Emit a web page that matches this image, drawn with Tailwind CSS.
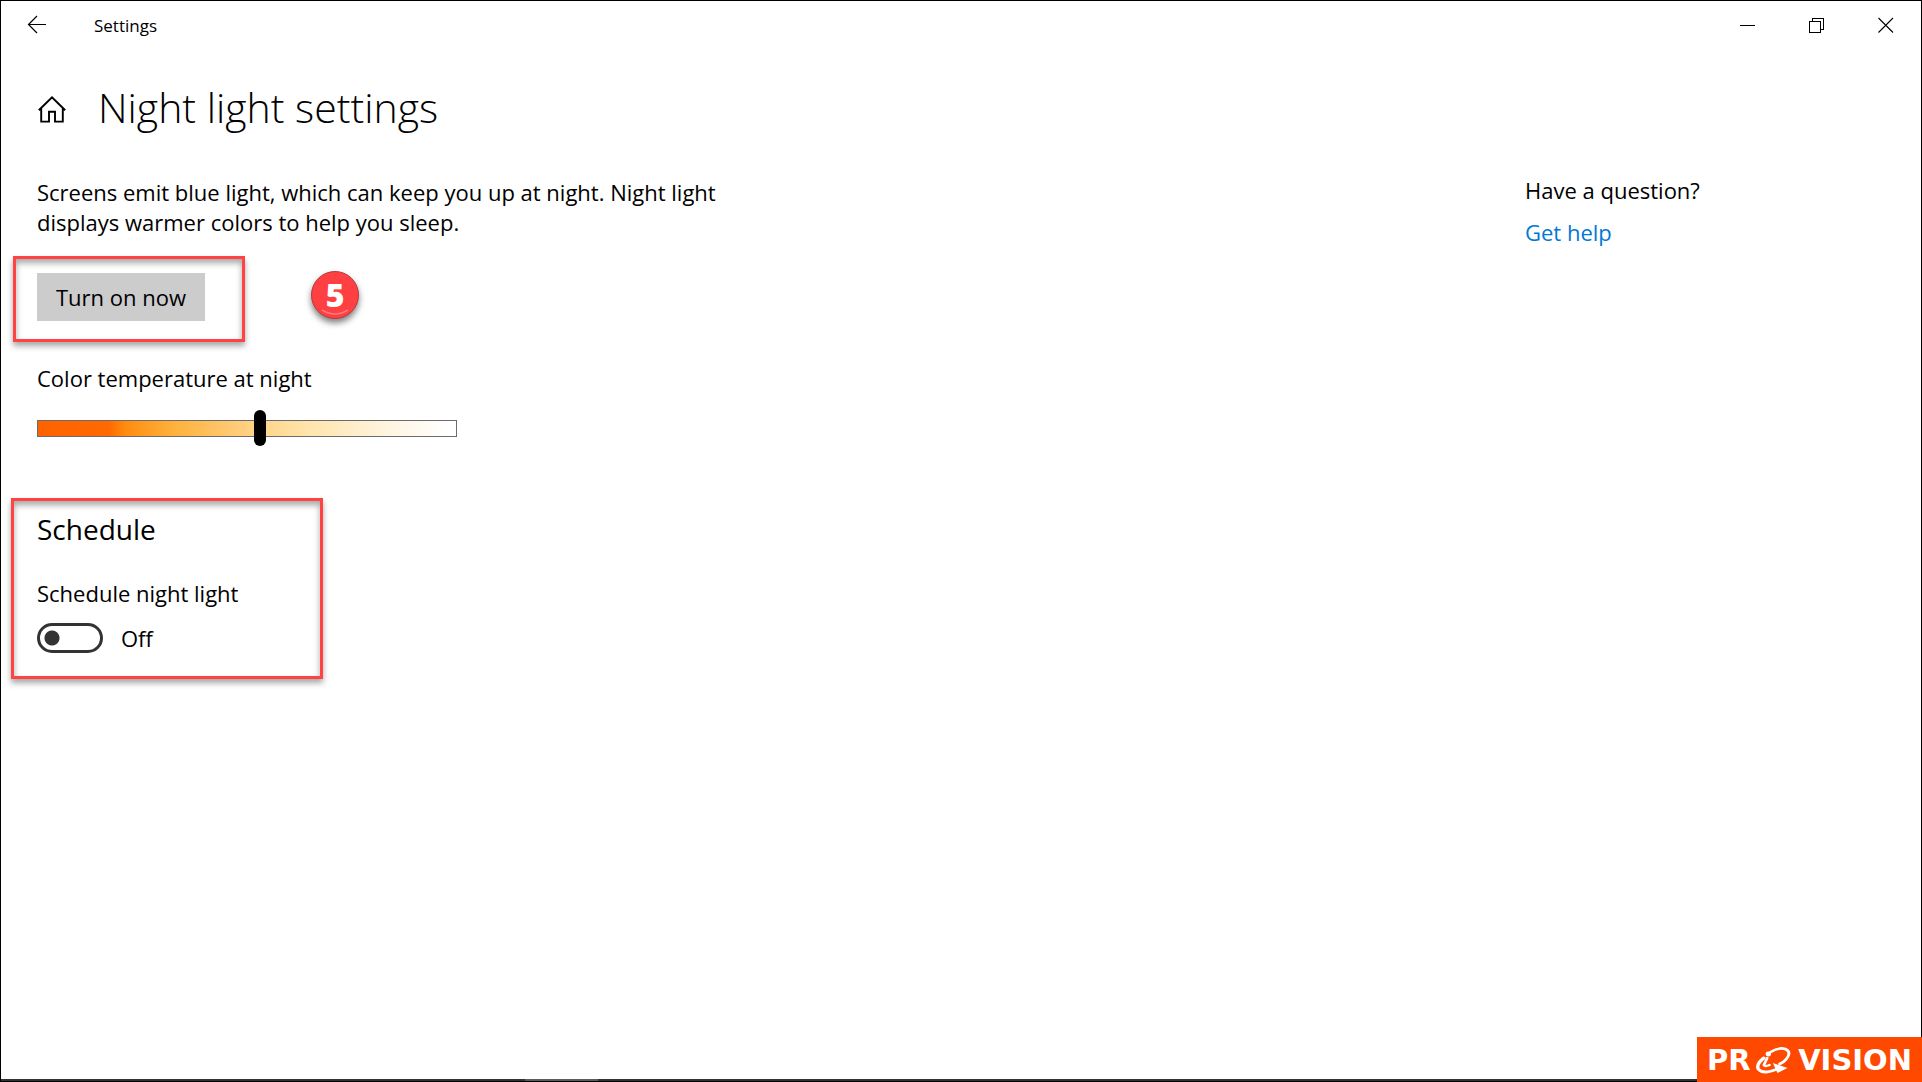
<!DOCTYPE html>
<html lang="en">

<head>
    <meta charset="UTF-8">
    <meta name="viewport" content="width=device-width, initial-scale=1.0">
    <title>Settings</title>
    <script src="https://cdn.jsdelivr.net/npm/@tailwindcss/browser@4"></script>
</head>

<body class="bg-white text-black font-['Open_Sans','Noto_Sans',sans-serif] text-[22px] leading-[30px]">

    <div class="relative min-h-screen flex flex-col border border-black">

        <!-- title bar -->
        <header class="flex items-center h-12 pl-[26px] pr-px">
            <button type="button" aria-label="Back" class="w-5 h-5">
                <svg class="w-5 h-5" viewBox="0 0 20 20" fill="none" stroke="black" stroke-width="1.2">
                    <path d="M19 9.5H1.5M10 1L1.5 9.5L10 18" />
                </svg>
            </button>
            <span class="ml-[47px] pt-0.5 text-[17px]">Settings</span>
            <div class="ml-auto flex">
                <button type="button" aria-label="Minimize" class="w-[69px] h-12 flex items-center justify-center">
                    <svg class="w-4 h-4" viewBox="0 0 16 16" fill="none" stroke="black" shape-rendering="crispEdges">
                        <path d="M0 8.5H15" />
                    </svg>
                </button>
                <button type="button" aria-label="Restore" class="w-[69px] h-12 flex items-center justify-center">
                    <svg class="w-4 h-4" viewBox="0 0 16 16" fill="none" stroke="black" shape-rendering="crispEdges">
                        <path d="M0.5 4.5H11.5V15.5H0.5ZM3.5 4V1.5H14.5V12.5H12" />
                    </svg>
                </button>
                <button type="button" aria-label="Close" class="w-[69px] h-12 flex items-center justify-center">
                    <svg class="w-4 h-4" viewBox="0 0 16 16" fill="none" stroke="black" stroke-width="1.1">
                        <path d="M0.5 1L15 15.5M15 1L0.5 15.5" />
                    </svg>
                </button>
            </div>
        </header>

        <div class="flex items-center mt-[30px] pl-[37px]">
            <a href="#" aria-label="Home" class="pt-1">
                <svg class="w-7 h-7" viewBox="0 0 28 28" fill="none" stroke="black" stroke-width="1.9">
                    <path d="M0.8 15.3L14 2.3L27.2 15.3M3.2 13.5V26.6H11V16.7H17V26.6H24.8V13.5" />
                </svg>
            </a>
            <h1 class="ml-8 text-[41px] leading-[56px] font-light">Night light settings</h1>
        </div>

        <div class="flex flex-1">
            <main class="flex-1 pl-2.5 pt-[42px]">
                <p class="ml-[26px] max-w-[700px]">Screens emit blue light, which can keep you up at night. Night light<br>displays warmer colors to help you sleep.</p>

                <div class="flex items-start mt-[19px] ml-0.5">
                    <div class="w-[232px] border-3 border-[#ff4343] pt-3.5 pb-[18px] pl-[21px] shadow-[0_4px_6px_rgba(0,0,0,0.35),inset_0_4px_6px_rgba(0,0,0,0.35)]">
                        <button type="button" class="block w-[168px] h-12 bg-[#cccccc]">Turn on now</button>
                    </div>
                    <div class="relative mt-[15px] ml-[66px] w-12 h-12 rounded-full bg-[#ff4043] border border-[#b53a40] flex items-center justify-center text-white text-[32px] font-extrabold shadow-[0_4px_6px_rgba(0,0,0,0.5)]">
                        5
                        <svg class="absolute bottom-px left-[9px] w-7 h-2" viewBox="0 0 28 8" fill="none" stroke="#ff7b7d" stroke-width="1.5">
                            <path d="M1 1Q14 9 27 1" />
                        </svg>
                    </div>
                </div>

                <label for="temperature" class="block mt-[21px] ml-[26px]">Color temperature at night</label>
                <input type="range" id="temperature" min="0" max="1000" value="533"
                    class="block mt-[17px] ml-[26px] w-[420px] h-9 appearance-none bg-transparent
                    [&::-webkit-slider-runnable-track]:h-[17px] [&::-webkit-slider-runnable-track]:border [&::-webkit-slider-runnable-track]:border-[#6b6b6b] [&::-webkit-slider-runnable-track]:bg-[linear-gradient(to_right,#ff6200_0%,#ff6a00_17%,#ff8c10_21%,#ffb03a_32%,#ffd080_50%,#ffe6b0_66%,#fff3dc_82%,#ffffff_98%)]
                    [&::-webkit-slider-thumb]:appearance-none [&::-webkit-slider-thumb]:w-3 [&::-webkit-slider-thumb]:h-9 [&::-webkit-slider-thumb]:-mt-[11px] [&::-webkit-slider-thumb]:rounded-full [&::-webkit-slider-thumb]:bg-black">

                <section class="w-[312px] mt-[52px] border-3 border-[#ff4343] pt-2 pb-[23px] pl-[23px] shadow-[0_4px_6px_rgba(0,0,0,0.35),inset_0_4px_6px_rgba(0,0,0,0.35)]">
                    <h2 class="text-[28px] leading-10">Schedule</h2>
                    <label for="schedule" class="block mt-[29px]">Schedule night light</label>
                    <div class="flex items-center mt-[15px]">
                        <input type="checkbox" id="schedule" role="switch"
                            class="appearance-none w-[66px] h-[30px] rounded-full border-3 border-[#333333] bg-[radial-gradient(circle_at_12px_12px,#333333_7px,transparent_8px)]">
                        <span class="ml-[18px]">Off</span>
                    </div>
                </section>
            </main>

            <aside class="w-[396px] pt-10">
                <p>Have a question?</p>
                <a href="#" class="block mt-3 text-[#0078d7]">Get help</a>
            </aside>
        </div>

        <!-- top edge of the taskbar -->
        <div class="h-0.5 bg-[#333333] pl-[524px]">
            <div class="w-[73px] h-0.5 bg-[#5c5c5c]"></div>
        </div>

        <div class="absolute -right-px -bottom-px w-[225px] h-[45px] px-2.5 bg-[#ff4800] flex items-center justify-between text-white text-[29px] font-bold font-['DejaVu_Sans',sans-serif]">
            <span>PR</span>
            <svg class="w-9 h-8" viewBox="0 0 32 32" preserveAspectRatio="none" fill="none" stroke="white" stroke-linecap="round">
                <path d="M13 8Q20 3 26 5Q32 8 27 15Q25 18 21 20" stroke-width="2.6" />
                <path d="M7 14Q0 20 2 25Q6 31 19 25" stroke-width="3" />
                <path d="M15 19L28 24L19 29Z" fill="white" stroke="none" />
                <path d="M10 14L7 21Q8 23 12 21" stroke-width="2.4" />
                <circle cx="11" cy="10" r="2.4" fill="white" stroke="none" />
            </svg>
            <span>VISION</span>
        </div>
    </div>

</body>

</html>
